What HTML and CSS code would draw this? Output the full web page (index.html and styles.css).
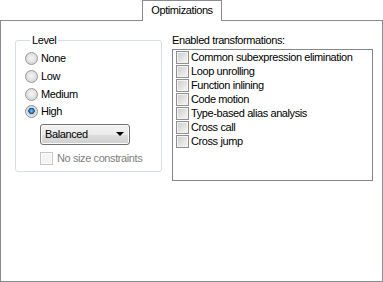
FILE: index.html
```html
<!DOCTYPE html>
<html>
<head>
<meta charset="utf-8">
<link rel="stylesheet" href="styles.css">
</head>
<body>
<div class="tabs">
  <div class="tab">Optimizations</div>
</div>
<div class="panel">
  <fieldset class="group">
    <legend class="group-title">Level</legend>
    <div class="radio-row"><span class="radio"></span><span>None</span></div>
    <div class="radio-row"><span class="radio"></span><span>Low</span></div>
    <div class="radio-row"><span class="radio"></span><span>Medium</span></div>
    <div class="radio-row"><span class="radio checked"></span><span>High</span></div>
    <div class="combo"><span class="combo-text">Balanced</span><span class="combo-arrow"></span></div>
    <div class="check-row disabled"><span class="check"></span><span>No size constraints</span></div>
  </fieldset>
  <div class="right">
    <div class="list-label">Enabled transformations:</div>
    <div class="list">
      <div class="item"><span class="check"></span><span>Common subexpression elimination</span></div>
      <div class="item"><span class="check"></span><span>Loop unrolling</span></div>
      <div class="item"><span class="check"></span><span>Function inlining</span></div>
      <div class="item"><span class="check"></span><span>Code motion</span></div>
      <div class="item"><span class="check"></span><span>Type-based alias analysis</span></div>
      <div class="item"><span class="check"></span><span>Cross call</span></div>
      <div class="item"><span class="check"></span><span>Cross jump</span></div>
    </div>
  </div>
</div>
</body>
</html>
```
FILE: styles.css
```css
html, body {
  margin: 0;
  padding: 0;
  background: #ffffff;
}
body {
  width: 383px;
  height: 282px;
  font-family: "Liberation Sans", Arial, sans-serif;
  font-size: 11px;
  line-height: 13px;
  letter-spacing: -0.4px;
  color: #000;
  overflow: hidden;
}
.tabs {
  height: 20px;
  display: flex;
  padding-left: 142px;
}
.tab {
  position: relative;
  z-index: 1;
  box-sizing: border-box;
  width: 80px;
  height: 21px;
  border: 1px solid #898c95;
  border-bottom: none;
  background: #fff;
  text-align: center;
  padding-top: 3px;
}
.panel {
  box-sizing: border-box;
  height: 262px;
  border: 1px solid #898c95;
  background: #fff;
  display: flex;
  align-items: flex-start;
  padding-left: 14px;
}
.group {
  box-sizing: border-box;
  margin: 13px 0 0 0;
  width: 147px;
  height: 138px;
  border: 1px solid #d5dfe5;
  border-radius: 3px;
  padding: 3px 0 0 9px;
}
.group-title {
  margin-left: 5px;
  padding: 0 2px;
}
.radio-row {
  display: flex;
  align-items: center;
  height: 17.7px;
  gap: 3px;
}
.radio {
  box-sizing: border-box;
  width: 13px;
  height: 13px;
  border-radius: 50%;
  border: 1px solid #979a9e;
  background: radial-gradient(circle at 50% 45%, #f6f6f6 0%, #e2e2e2 50%, #cfcfcf 85%);
}
.radio.checked {
  border-color: #8c9197;
  background: radial-gradient(circle at 50% 45%, #8ad0ff 0%, #2b86cf 22%, #17497a 36%, #d2d2d2 42%, #e6e6e6 70%, #d6d6d6 95%);
}
.combo {
  box-sizing: border-box;
  margin: 3px 0 0 15px;
  width: 90px;
  height: 21px;
  border: 1px solid #707070;
  border-radius: 3px;
  background: linear-gradient(#f2f2f2 0%, #ebebeb 50%, #dddddd 51%, #cfcfcf 100%);
  box-shadow: inset 0 0 0 1px #fcfcfc;
  display: flex;
  align-items: center;
  justify-content: space-between;
  padding: 0 5px 0 4px;
}
.combo-arrow {
  width: 0;
  height: 0;
  border-left: 4px solid transparent;
  border-right: 4px solid transparent;
  border-top: 4px solid #000;
}
.check-row {
  display: flex;
  align-items: center;
  gap: 4px;
  margin: 7px 0 0 15px;
  height: 14px;
}
.check {
  box-sizing: border-box;
  flex: none;
  width: 13px;
  height: 13px;
  border: 1px solid #8e8f8f;
  background: linear-gradient(135deg, #cbcbcb 0%, #e6e6e6 60%, #f7f7f7 100%);
  box-shadow: inset 0 0 0 1px #f4f4f4;
}
.disabled {
  color: #7f7f7f;
}
.disabled .check {
  border-color: #c5c5c5;
  background: #f4f4f4;
  box-shadow: inset 0 0 0 1px #fbfbfb;
}
.right {
  margin-left: 10px;
  margin-top: 13px;
}
.list-label {
  height: 15px;
}
.list {
  box-sizing: border-box;
  width: 201px;
  height: 132px;
  border: 1px solid #828790;
  padding: 0 0 0 3px;
}
.item {
  display: flex;
  align-items: center;
  height: 14px;
  gap: 2px;
}
```
